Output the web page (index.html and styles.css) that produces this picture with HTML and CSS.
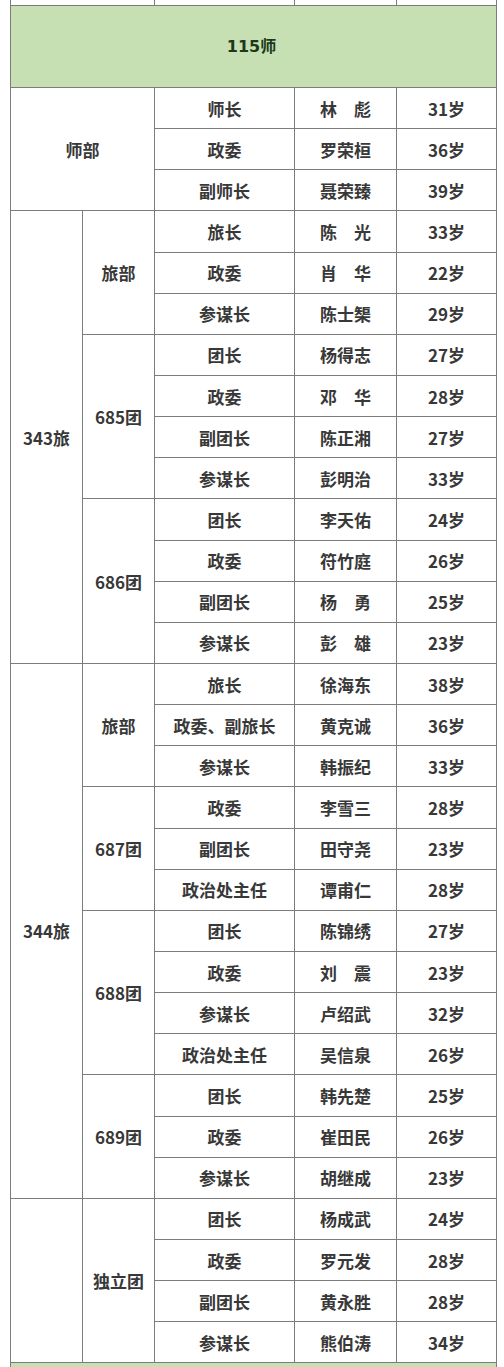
FILE: index.html
```html
<!DOCTYPE html>
<html lang="zh">
<head>
<meta charset="utf-8">
<link rel="stylesheet" href="styles.css">
</head>
<body>
<table class="sheet">
  <colgroup>
    <col class="c1"><col class="c2"><col class="c3"><col class="c4"><col class="c5">
  </colgroup>
  <tr class="stub"><td colspan="2"></td><td></td><td></td><td></td></tr>
  <tr class="head"><td colspan="5">115师</td></tr>

  <tr><td colspan="2" rowspan="3">师部</td><td>师长</td><td>林　彪</td><td>31岁</td></tr>
  <tr><td>政委</td><td>罗荣桓</td><td>36岁</td></tr>
  <tr><td>副师长</td><td>聂荣臻</td><td>39岁</td></tr>

  <tr><td rowspan="11">343旅</td><td rowspan="3">旅部</td><td>旅长</td><td>陈　光</td><td>33岁</td></tr>
  <tr><td>政委</td><td>肖　华</td><td>22岁</td></tr>
  <tr><td>参谋长</td><td>陈士榘</td><td>29岁</td></tr>
  <tr><td rowspan="4">685团</td><td>团长</td><td>杨得志</td><td>27岁</td></tr>
  <tr><td>政委</td><td>邓　华</td><td>28岁</td></tr>
  <tr><td>副团长</td><td>陈正湘</td><td>27岁</td></tr>
  <tr><td>参谋长</td><td>彭明治</td><td>33岁</td></tr>
  <tr><td rowspan="4">686团</td><td>团长</td><td>李天佑</td><td>24岁</td></tr>
  <tr><td>政委</td><td>符竹庭</td><td>26岁</td></tr>
  <tr><td>副团长</td><td>杨　勇</td><td>25岁</td></tr>
  <tr><td>参谋长</td><td>彭　雄</td><td>23岁</td></tr>

  <tr><td rowspan="13">344旅</td><td rowspan="3">旅部</td><td>旅长</td><td>徐海东</td><td>38岁</td></tr>
  <tr><td>政委、副旅长</td><td>黄克诚</td><td>36岁</td></tr>
  <tr><td>参谋长</td><td>韩振纪</td><td>33岁</td></tr>
  <tr><td rowspan="3">687团</td><td>政委</td><td>李雪三</td><td>28岁</td></tr>
  <tr><td>副团长</td><td>田守尧</td><td>23岁</td></tr>
  <tr><td>政治处主任</td><td>谭甫仁</td><td>28岁</td></tr>
  <tr><td rowspan="4">688团</td><td>团长</td><td>陈锦绣</td><td>27岁</td></tr>
  <tr><td>政委</td><td>刘　震</td><td>23岁</td></tr>
  <tr><td>参谋长</td><td>卢绍武</td><td>32岁</td></tr>
  <tr><td>政治处主任</td><td>吴信泉</td><td>26岁</td></tr>
  <tr><td rowspan="3">689团</td><td>团长</td><td>韩先楚</td><td>25岁</td></tr>
  <tr><td>政委</td><td>崔田民</td><td>26岁</td></tr>
  <tr><td>参谋长</td><td>胡继成</td><td>23岁</td></tr>

  <tr><td rowspan="4"></td><td rowspan="4">独立团</td><td>团长</td><td>杨成武</td><td>24岁</td></tr>
  <tr><td>政委</td><td>罗元发</td><td>28岁</td></tr>
  <tr><td>副团长</td><td>黄永胜</td><td>28岁</td></tr>
  <tr><td>参谋长</td><td>熊伯涛</td><td>34岁</td></tr>

  <tr class="foot"><td colspan="5"></td></tr>
</table>
</body>
</html>
```

FILE: styles.css
```css
html, body {
  margin: 0;
  padding: 0;
  background: #ffffff;
  overflow: hidden;
}

body {
  height: 1367px;
  font-family: "Noto Sans CJK SC", "Noto Sans", sans-serif;
}

.sheet {
  border-collapse: collapse;
  table-layout: fixed;
  margin: -1px 0 0 10px;
  width: 487px;
  color: #383838;
  font-size: 17px;
  font-weight: 700;
}

.c1 { width: 72px; }
.c2 { width: 72px; }
.c3 { width: 140px; }
.c4 { width: 102px; }
.c5 { width: 100px; }

.sheet td {
  border: 1px solid #7c7c7c;
  padding: 0;
  text-align: center;
  vertical-align: middle;
  white-space: nowrap;
  line-height: 1;
}

.sheet tr {
  height: 41.15px;
}

.sheet tr.stub {
  height: 6px;
}

.sheet tr.head {
  height: 82px;
}

.sheet tr.head td {
  background: #c6e0b4;
  color: #1c3a17;
  font-family: "DejaVu Sans", "Noto Sans CJK SC", sans-serif;
  font-size: 16px;
  font-weight: 700;
  padding-right: 4px;
}

.sheet tr.foot {
  height: 20px;
}

.sheet tr.foot td {
  background: #c6e0b4;
}
```
